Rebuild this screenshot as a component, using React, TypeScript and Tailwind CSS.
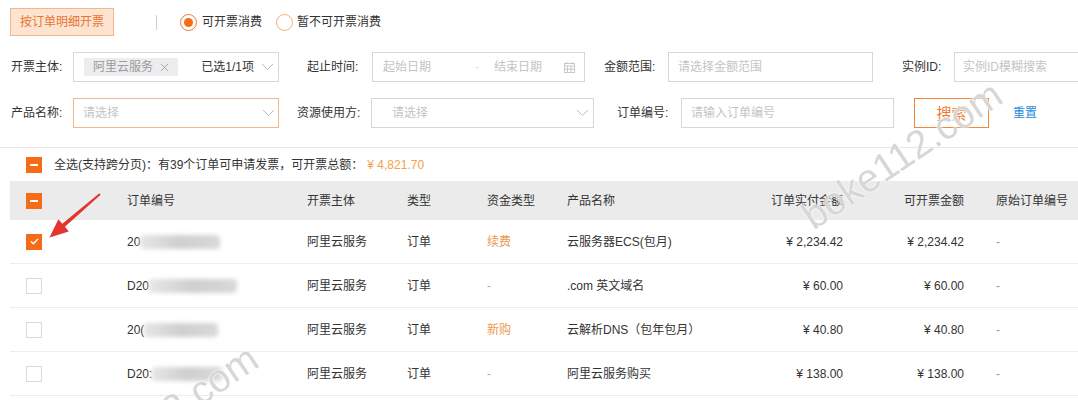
import React from 'react'

type Row = {
  head: string
  blur: number
  subject: string
  kind: string
  fund: string
  fundNew?: boolean
  product: string
  paid: string
  invoice: string
  checked?: boolean
}

const rows: Row[] = [
  { head: '20', blur: 80, subject: '阿里云服务', kind: '订单', fund: '续费', fundNew: true, product: '云服务器ECS(包月)', paid: '¥ 2,234.42', invoice: '¥ 2,234.42', checked: true },
  { head: 'D20', blur: 88, subject: '阿里云服务', kind: '订单', fund: '-', product: '.com 英文域名', paid: '¥ 60.00', invoice: '¥ 60.00' },
  { head: '20(', blur: 74, subject: '阿里云服务', kind: '订单', fund: '新购', fundNew: true, product: '云解析DNS（包年包月）', paid: '¥ 40.80', invoice: '¥ 40.80' },
  { head: 'D20:', blur: 70, subject: '阿里云服务', kind: '订单', fund: '-', product: '阿里云服务购买', paid: '¥ 138.00', invoice: '¥ 138.00' },
]

function Chevron() {
  return (
    <svg width="13" height="8" viewBox="0 0 13 8" className="block shrink-0">
      <path d="M1 1l5.5 5.5L12 1" fill="none" stroke="#bdbdbd" strokeWidth="1" />
    </svg>
  )
}

function Calendar() {
  return (
    <svg width="11" height="11" viewBox="0 0 11 11" className="block shrink-0">
      <rect x="0.5" y="1.5" width="10" height="9" fill="none" stroke="#c8c8c8" />
      <path d="M0.5 4h10M3.5 4v6.5M7 4v6.5M0.5 7.2h10M3 0v2M8 0v2" stroke="#c8c8c8" strokeWidth="1" />
    </svg>
  )
}

function Minus() {
  return (
    <span className="w-4 h-4 bg-[#f56b18] flex items-center justify-center shrink-0">
      <span className="block w-2 h-[2px] bg-white" />
    </span>
  )
}

function Check({ checked }: { checked?: boolean }) {
  if (checked) {
    return (
      <span className="w-4 h-4 bg-[#f56b18] flex items-center justify-center shrink-0">
        <svg width="9" height="7" viewBox="0 0 9 7">
          <path d="M1 3.5l2.3 2.3L8 1" fill="none" stroke="#fff" strokeWidth="1.4" />
        </svg>
      </span>
    )
  }
  return <span className="block w-4 h-4 border border-[#d9d9d9] bg-white shrink-0" />
}

function Label({ text, cls }: { text: string; cls: string }) {
  return <span className={`block text-[12px] text-[#333] shrink-0 ${cls}`}>{text}</span>
}

function Watermark({ cls }: { cls: string }) {
  return (
    <div
      className={`absolute pointer-events-none select-none whitespace-nowrap text-[39px] leading-none font-['Liberation_Sans',sans-serif] text-[rgba(140,140,140,0.36)] -rotate-[34deg] origin-left [text-shadow:0_0_2px_#fff,0_0_2px_#fff] ${cls}`}
    >
      boke112.com
    </div>
  )
}

export default function App() {
  return (
    <div className="relative w-[1078px] h-[400px] overflow-hidden bg-white font-['Liberation_Sans','Noto_Sans_CJK_SC',sans-serif] leading-none text-[#333]">
      {/* top switch */}
      <div className="flex items-center pt-[8px] pl-[10px]">
        <button className="h-[28px] px-[9px] bg-[#fde4d1] border border-[#f4b78d] text-[#e87432] text-[12px]">按订单明细开票</button>
        <span className="block ml-[42px] w-px h-[15px] bg-[#d0d0d0]" />
        <span className="ml-[23px] w-[17px] h-[17px] rounded-full border border-[#f07a2c] flex items-center justify-center">
          <span className="block w-[9px] h-[9px] rounded-full bg-[#f56b18]" />
        </span>
        <span className="ml-[5px] text-[12px]">可开票消费</span>
        <span className="block ml-[14px] w-[17px] h-[17px] rounded-full border border-[#f0b07e]" />
        <span className="ml-[4px] text-[12px]">暂不可开票消费</span>
      </div>

      {/* filter row 1 */}
      <div className="flex items-center mt-[16px] pl-[11px] h-[30px]">
        <Label text="开票主体:" cls="w-[62px]" />
        <div className="w-[206px] shrink-0 h-[30px] border border-[#d6d6d6] flex items-center pl-[10px] pr-[4px]">
          <span className="h-[18px] px-[9px] bg-[#ededf0] text-[#9a9a9a] text-[12px] flex items-center gap-[7px]">
            阿里云服务
            <svg width="9" height="9" viewBox="0 0 9 9"><path d="M1 1l7 7M8 1l-7 7" stroke="#aaa" strokeWidth="1" /></svg>
          </span>
          <span className="ml-auto text-[12px] text-[#333]">已选1/1项</span>
          <span className="ml-[7px]"><Chevron /></span>
        </div>
        <Label text="起止时间:" cls="ml-[28px] w-[65px]" />
        <div className="w-[213px] shrink-0 h-[30px] border border-[#d6d6d6] flex items-center pl-[10px] pr-[9px] text-[12px] text-[#c4c4c4]">
          <span className="w-[92px]">起始日期</span>
          <span className="w-[19px] text-[#e4e4e4]">-</span>
          <span>结束日期</span>
          <span className="ml-auto"><Calendar /></span>
        </div>
        <Label text="金额范围:" cls="ml-[19px] w-[64px]" />
        <div className="w-[205px] shrink-0 h-[30px] border border-[#d6d6d6] flex items-center pl-[9px] text-[12px] text-[#c4c4c4]">请选择金额范围</div>
        <Label text="实例ID:" cls="ml-[29px] w-[52px]" />
        <div className="w-[140px] h-[30px] border border-[#d6d6d6] flex items-center pl-[8px] text-[12px] text-[#c4c4c4] shrink-0">实例ID模糊搜索</div>
      </div>

      {/* filter row 2 */}
      <div className="flex items-center mt-[16px] pl-[11px] h-[30px]">
        <Label text="产品名称:" cls="w-[62px]" />
        <div className="w-[206px] shrink-0 h-[30px] border border-[#f3b88e] flex items-center pl-[9px] pr-[3px] text-[12px] text-[#c4c4c4]">
          请选择
          <span className="ml-auto"><Chevron /></span>
        </div>
        <Label text="资源使用方:" cls="ml-[18px] w-[74px]" />
        <div className="w-[223px] shrink-0 h-[30px] border border-[#d6d6d6] flex items-center pl-[20px] pr-[4px] text-[12px] text-[#c4c4c4]">
          请选择
          <span className="ml-auto"><Chevron /></span>
        </div>
        <Label text="订单编号:" cls="ml-[23px] w-[64px]" />
        <div className="w-[213px] shrink-0 h-[30px] border border-[#d6d6d6] flex items-center pl-[9px] text-[12px] text-[#c4c4c4]">请输入订单编号</div>
        <button className="ml-[20px] w-[75px] shrink-0 h-[30px] border border-[#f0883a] text-[#ec7a2e] text-[15px] flex items-center justify-center">搜索</button>
        <span className="ml-[24px] text-[12px] text-[#1e8cd8] shrink-0">重置</span>
      </div>

      {/* table */}
      <div className="mt-[19px] border-t border-[#e6e6e6]">
        <div className="ml-[10px] h-[33px] flex items-center pl-[16px] text-[12px]">
          <Minus />
          <span className="ml-[12px]">全选(支持跨分页)：有39个订单可申请发票，可开票总额：</span>
          <span className="ml-[4px] text-[#f2a24a]">¥ 4,821.70</span>
        </div>
        <div className="ml-[10px] h-[39px] bg-[#ebebeb] flex items-center text-[12px]">
          <span className="w-[117px] pl-[16px] shrink-0"><Minus /></span>
          <span className="w-[180px] shrink-0">订单编号</span>
          <span className="w-[100px] shrink-0">开票主体</span>
          <span className="w-[80px] shrink-0">类型</span>
          <span className="w-[80px] shrink-0">资金类型</span>
          <span className="w-[156px] shrink-0">产品名称</span>
          <span className="w-[120px] shrink-0 text-right">订单实付金额</span>
          <span className="w-[121px] shrink-0 text-right">可开票金额</span>
          <span className="pl-[32px] shrink-0">原始订单编号</span>
        </div>
        {rows.map((r, i) => (
          <div key={i} className="ml-[10px] h-[44px] flex items-center text-[12px] border-b border-[#ececec]">
            <span className="w-[117px] pl-[16px] shrink-0"><Check checked={r.checked} /></span>
            <span className="w-[180px] shrink-0 flex items-center">
              {r.head}
              <span
                className="block h-[14px] bg-gradient-to-r from-[#e6e6e6] via-[#cfcfcf] to-[#d9d9d9] blur-[2px] rounded-sm"
                style={{ width: r.blur }}
              />
            </span>
            <span className="w-[100px] shrink-0">{r.subject}</span>
            <span className="w-[80px] shrink-0">{r.kind}</span>
            <span className={`w-[80px] shrink-0 ${r.fundNew ? 'text-[#eb9a52]' : 'text-[#aaa]'}`}>{r.fund}</span>
            <span className="w-[156px] shrink-0">{r.product}</span>
            <span className="w-[120px] shrink-0 text-right">{r.paid}</span>
            <span className="w-[121px] shrink-0 text-right">{r.invoice}</span>
            <span className="pl-[32px] shrink-0 text-[#999]">-</span>
          </div>
        ))}
      </div>

      {/* red arrow */}
      <svg className="absolute left-0 top-0 pointer-events-none" width="1078" height="400">
        <polygon
          points="99.4,193.2 62.3,223.8 58.4,219.2 49.5,237.5 68.8,231.4 64.9,226.8 100.6,194.8"
          fill="#e3342f"
        />
      </svg>

      <Watermark cls="left-[806px] top-[200px]" />
      <Watermark cls="left-[62px] top-[464px]" />
    </div>
  )
}
